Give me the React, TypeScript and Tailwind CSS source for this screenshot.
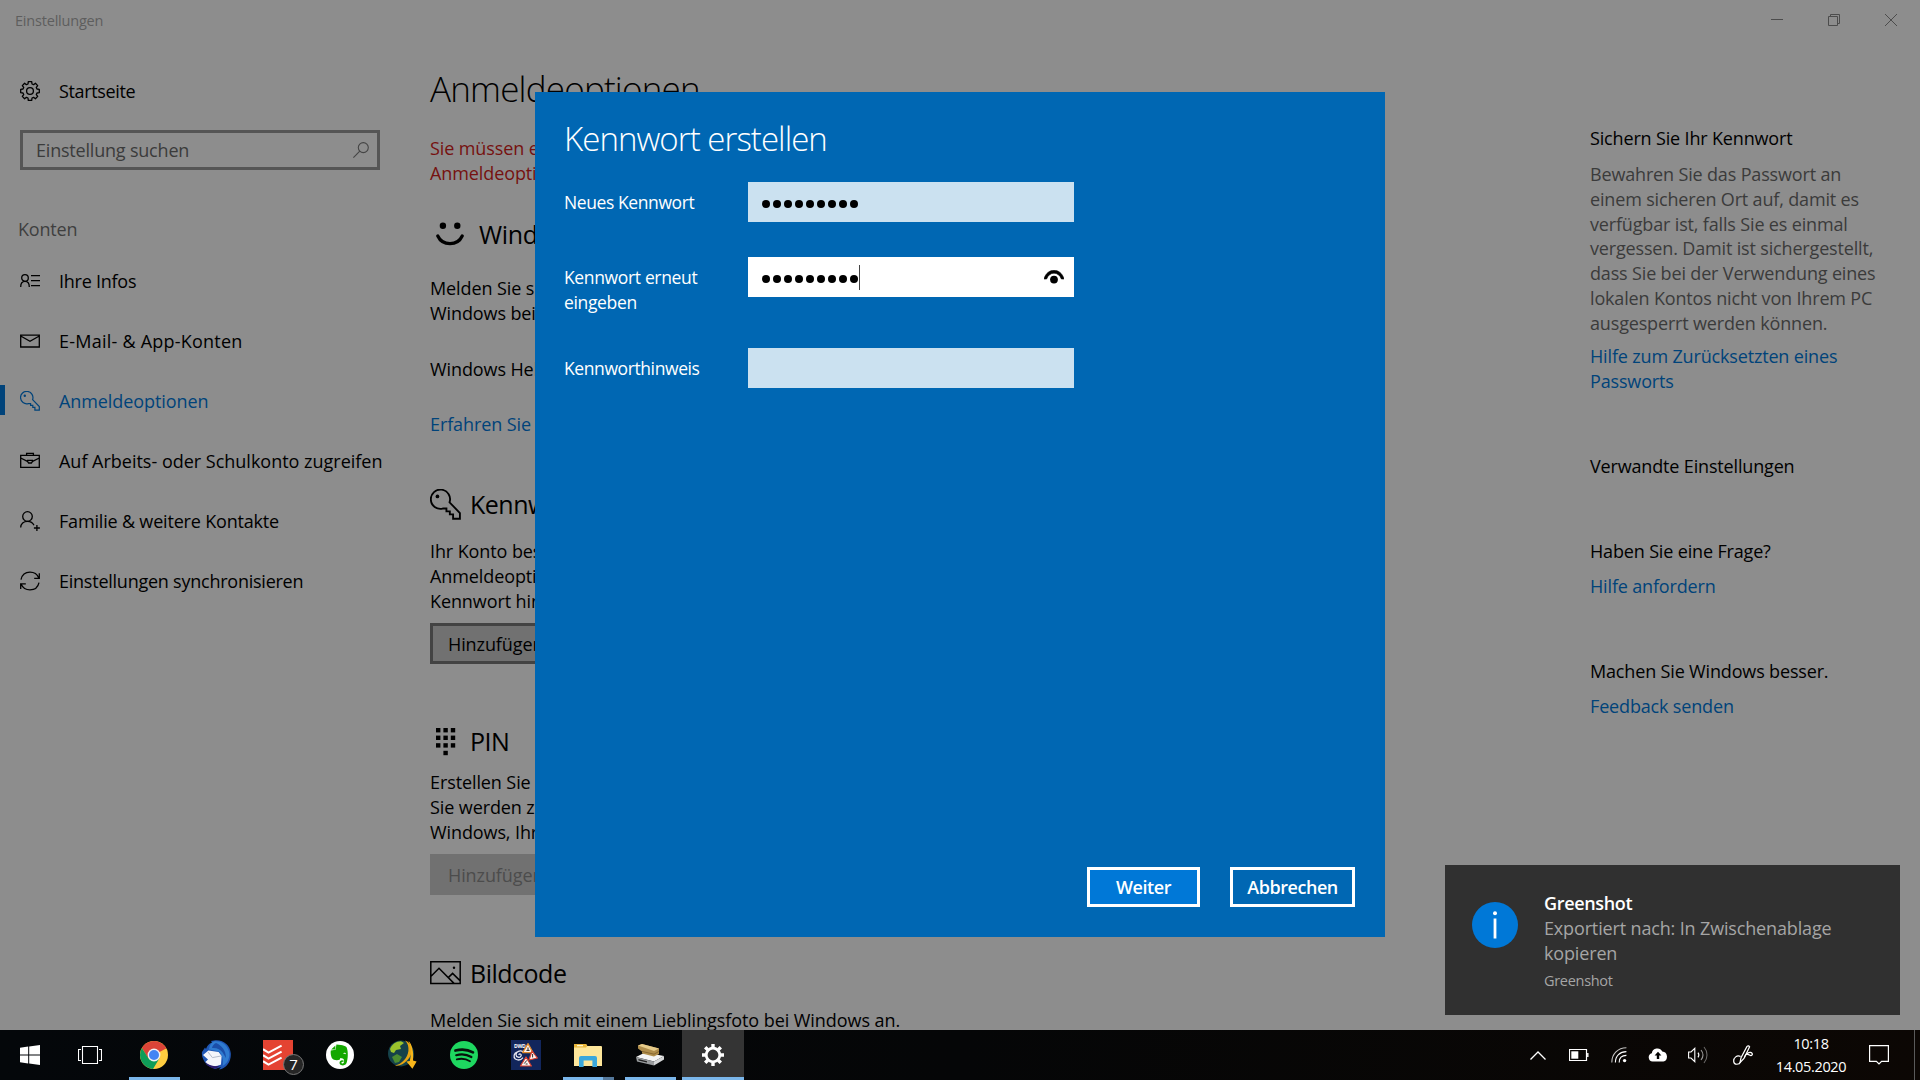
import type { ReactNode } from 'react';

type IconProps = { className?: string };

const GearIcon = ({ className }: IconProps) => (
  <svg viewBox="0 0 20 20" className={className} fill="none" stroke="currentColor" strokeWidth="1.3" strokeLinejoin="round">
    <path d="M8 3 L8.3 .7 H11.7 L12 3 L13.6 3.7 L15.4 2.3 L17.7 4.6 L16.3 6.4 L17 8 L19.3 8.3 V11.7 L17 12 L16.3 13.6 L17.7 15.4 L15.4 17.7 L13.6 16.3 L12 17 L11.7 19.3 H8.3 L8 17 L6.4 16.3 L4.6 17.7 L2.3 15.4 L3.7 13.6 L3 12 L.7 11.7 V8.3 L3 8 L3.7 6.4 L2.3 4.6 L4.6 2.3 L6.4 3.7 Z" />
    <circle cx="10" cy="10" r="3.4" />
  </svg>
);

const InfoIcon = () => (
  <svg viewBox="0 0 20 20" className="size-5" fill="none" stroke="currentColor" strokeWidth="1.3">
    <circle cx="5" cy="7" r="3.3" />
    <path d="M.7 16 C.7 12.5 2.5 10.4 5 10.4 S9.3 12.5 9.3 16 M11 4.6 H20 M11 9.6 H20 M11 14.6 H20" />
  </svg>
);

const MailIcon = () => (
  <svg viewBox="0 0 20 20" className="size-5" fill="none" stroke="currentColor" strokeWidth="1.3">
    <path d="M.7 4.2 H19.3 V16 H.7 Z M.7 5 L10 10.2 L19.3 5" />
  </svg>
);

const KeyIcon = ({ className }: IconProps) => (
  <svg viewBox="0 0 20 20" className={className} fill="none" stroke="currentColor" strokeWidth="1.2">
    <path d="M12.6 8.6 A6.2 6.2 0 1 0 8.2 12.6 L10.6 12.6 V14.4 H12.8 V16.4 H14.9 V19.2 H19.3 V15.5 Z" />
    <circle cx="4.8" cy="4.8" r="1.2" fill="currentColor" stroke="none" />
  </svg>
);

const BriefcaseIcon = () => (
  <svg viewBox="0 0 20 20" className="size-5" fill="none" stroke="currentColor" strokeWidth="1.3">
    <path d="M.7 4.4 H19.3 V16.4 H.7 Z M6.6 4.4 V2.4 H13.4 V4.4 M.7 7 L7.4 10.4 M19.3 7 L12.6 10.4 M7.6 9.4 H12.4 V10.6 L11.4 12 H8.6 L7.6 10.6 Z" />
  </svg>
);

const FamilyIcon = () => (
  <svg viewBox="0 0 20 20" className="size-5" fill="none" stroke="currentColor" strokeWidth="1.3">
    <circle cx="7.5" cy="5.5" r="4.8" />
    <path d="M.7 16.5 C.7 12.6 3.6 10.3 7.5 10.3 C10.6 10.3 13 12 14 14.2 M16.9 14 V20 M13.9 17 H19.9" />
  </svg>
);

const SyncIcon = () => (
  <svg viewBox="0 0 20 20" className="size-5" fill="none" stroke="currentColor" strokeWidth="1.3">
    <path d="M1 8.6 C2 4 5.6 1.2 10 1.2 C14 1.2 17.3 3.4 18.8 7 M19.3 2.2 V7.4 H14.2 M19 11.6 C18 16.2 14.4 18.9 10 18.9 C6 18.9 2.7 16.8 1.2 13.3 M.7 18 V12.9 H5.8" />
  </svg>
);

const SearchIcon = () => (
  <svg viewBox="0 0 16 16" className="size-4 text-[#454545]" fill="none" stroke="currentColor" strokeWidth="1.1">
    <circle cx="10.3" cy="5.6" r="5" />
    <path d="M6.8 9.2 L.4 15.6" />
  </svg>
);

const SmileIcon = () => (
  <svg viewBox="0 0 28 24" className="ml-1.5 h-6 w-7" fill="none">
    <circle cx="6.9" cy="3.7" r="3.2" fill="black" />
    <circle cx="21.3" cy="3.7" r="3.2" fill="black" />
    <path d="M1.8 14 C6.5 24.2 21.5 24.2 26.2 14" stroke="black" strokeWidth="3.2" strokeLinecap="round" />
  </svg>
);

const PinIcon = () => (
  <svg viewBox="0 0 20 28" className="mt-0.5 ml-1.5 h-7 w-5">
    {[0, 7.6, 15.2].map((y) => [0, 7.4, 14.8].map((x) => (
      <rect key={`${x}-${y}`} x={x} y={y} width="4.4" height="4.4" />
    )))}
    <rect x="7.4" y="22.8" width="4.4" height="4.4" />
  </svg>
);

const PictureIcon = () => (
  <svg viewBox="0 0 31 24" className="h-6 w-[31px]" fill="none" stroke="black" strokeWidth="1.5">
    <path d="M.8 .8 H30.2 V22.6 H.8 Z M.8 15.5 L9 7.2 L24 22.4 M18.2 16.6 L22.6 12.4 L30 19.6" />
    <circle cx="24" cy="6.7" r="1.2" fill="black" stroke="none" />
  </svg>
);

const navItems = [
  { label: 'Ihre Infos', icon: <InfoIcon />, tracking: 'tracking-[-0.25px]' },
  { label: 'E-Mail- & App-Konten', icon: <MailIcon />, tracking: 'tracking-[0.23px]' },
  { label: 'Anmeldeoptionen', icon: <KeyIcon className="size-5" />, tracking: 'tracking-[-0.08px]', active: true },
  { label: 'Auf Arbeits- oder Schulkonto zugreifen', icon: <BriefcaseIcon />, tracking: 'tracking-[-0.01px]' },
  { label: 'Familie & weitere Kontakte', icon: <FamilyIcon />, tracking: 'tracking-[-0.18px]' },
  { label: 'Einstellungen synchronisieren', icon: <SyncIcon />, tracking: 'tracking-[-0.24px]' },
];

const Sidebar = () => (
  <nav className="w-[430px] shrink-0 pt-[31px]">
    <div className="flex h-10 items-center pl-5">
      <GearIcon className="size-5" />
      <span className="ml-[19px] tracking-[-0.35px]">Startseite</span>
    </div>
    <div className="mt-[19px] ml-5 flex h-10 w-[360px] items-center justify-between border-3 border-[#555] pr-2 pl-[13px] text-[#3b3b3b]">
      <span>Einstellung suchen</span>
      <SearchIcon />
    </div>
    <h2 className="mt-[47px] pl-[18px] text-[#3f3f3f]">Konten</h2>
    <ul className="mt-[9px]">
      {navItems.map((item) => (
        <li key={item.label} className={`flex h-[60px] items-center ${item.active ? 'text-[#00437a]' : ''}`}>
          <span className={`mb-[2px] h-[30px] w-[5px] ${item.active ? 'bg-[#00437a]' : ''}`} />
          <span className="ml-[15px]">{item.icon}</span>
          <span className={`ml-[19px] whitespace-nowrap ${item.tracking}`}>{item.label}</span>
        </li>
      ))}
    </ul>
  </nav>
);

const SectionTitle = ({ icon, children }: { icon: ReactNode; children: ReactNode }) => (
  <h2 className="flex h-[34px] items-center text-[25px] leading-[34px] tracking-[-0.5px]">
    <span className="w-[40px] shrink-0">{icon}</span>
    {children}
  </h2>
);

const SignInOptions = () => (
  <main className="w-[1160px] shrink-0 tracking-[-0.1px] whitespace-nowrap">
    <h1 className="pt-[24px] text-[35px] leading-[50px] font-[350] tracking-[-0.8px]">Anmeldeoptionen</h1>
    <p className="mt-[22px] text-[#761110]">
      Sie müssen ein<br />
      Anmeldeoption
    </p>
    <section className="mt-[31px]">
      <h2 className="flex h-[34px] items-center pb-px text-[25px] leading-[34px] tracking-[-0.3px]">
        <span className="w-[49px] shrink-0"><SmileIcon /></span>
        Windows
      </h2>
      <p className="mt-[25px]">
        Melden Sie sich<br />
        Windows bei
      </p>
      <p className="mt-[31px]">Windows Hello</p>
      <p className="mt-[30px] text-[#00437a]">Erfahren Sie</p>
    </section>
    <section className="mt-[50px]">
      <SectionTitle icon={<KeyIcon className="size-[31px]" />}>Kennwort</SectionTitle>
      <p className="mt-[18px]">
        Ihr Konto besitzt<br />
        Anmeldeoption<br />
        Kennwort hinzu
      </p>
      <button className="mt-[9px] flex h-[41px] items-center border-3 border-[#434343] bg-[#717171] px-[15px] pt-px">Hinzufügen</button>
    </section>
    <section className="mt-[60px]">
      <SectionTitle icon={<PinIcon />}>PIN</SectionTitle>
      <p className="mt-[12px]">
        Erstellen Sie<br />
        Sie werden zur<br />
        Windows, Ihre
      </p>
      <button className="mt-[9px] flex h-[41px] items-center bg-[#717171] px-[18px] pt-px text-[#4c4c4c]">Hinzufügen</button>
    </section>
    <section className="mt-[61px]">
      <SectionTitle icon={<PictureIcon />}>Bildcode</SectionTitle>
      <p className="mt-[18px] tracking-[-0.06px]">Melden Sie sich mit einem Lieblingsfoto bei Windows an.</p>
    </section>
  </main>
);

const HelpColumn = () => (
  <aside className="w-[330px] pt-[86px] tracking-[-0.16px] whitespace-nowrap">
    <h3>Sichern Sie Ihr Kennwort</h3>
    <p className="mt-[11px] leading-[24.8px] text-[#3b3b3b]">
      Bewahren Sie das Passwort an<br />
      einem sicheren Ort auf, damit es<br />
      verfügbar ist, falls Sie es einmal<br />
      vergessen. Damit ist sichergestellt,<br />
      dass Sie bei der Verwendung eines<br />
      lokalen Kontos nicht von Ihrem PC<br />
      ausgesperrt werden können.
    </p>
    <p className="mt-2 text-[#00437a]">
      Hilfe zum Zurücksetzten eines<br />
      Passworts
    </p>
    <h3 className="mt-[60px]">Verwandte Einstellungen</h3>
    <h3 className="mt-[60px]">Haben Sie eine Frage?</h3>
    <p className="mt-2.5 text-[#00437a]">Hilfe anfordern</p>
    <h3 className="mt-[60px]">Machen Sie Windows besser.</h3>
    <p className="mt-2.5 text-[#00437a]">Feedback senden</p>
  </aside>
);

const Dots = () => (
  <div className="flex gap-[3px]">
    {Array.from({ length: 9 }, (_, i) => (
      <span key={i} className="size-2 rounded-full bg-black" />
    ))}
  </div>
);

const PasswordDialog = () => (
  <div className="absolute top-[92px] left-[535px] flex h-[845px] w-[850px] flex-col bg-[#0067b3] pt-[24px] pr-[30px] pb-[30px] pl-[29px] text-white">
    <h1 className="h-[46px] text-[33px] leading-[46px] font-[350] tracking-[-0.95px]">Kennwort erstellen</h1>
    <div className="mt-5 flex h-10">
      <label className="w-[184px] pt-2 text-[17.5px] tracking-[-0.4px]">Neues Kennwort</label>
      <div className="flex w-[326px] items-center bg-[#cbe1f0] px-3.5 pt-1">
        <Dots />
      </div>
    </div>
    <div className="mt-[35px] flex h-10">
      <label className="w-[184px] pt-2 text-[17.5px] leading-[24.5px] tracking-[-0.35px]">Kennwort erneut<br />eingeben</label>
      <div className="flex w-[326px] items-center bg-white px-3.5">
        <div className="pt-1"><Dots /></div>
        <span className="ml-px h-[25px] w-px bg-[#444]" />
        <svg viewBox="0 0 20 14" className="mr-[-4px] mb-px ml-auto h-3.5 w-5" fill="none">
          <path d="M0 9 C3 -2.6 17 -2.6 20 9 L17.4 9 C14.6 1.2 5.4 1.2 2.6 9 Z" fill="black" stroke="black" strokeWidth=".6" />
          <circle cx="10" cy="9.6" r="3.9" fill="black" />
        </svg>
      </div>
    </div>
    <div className="mt-[51px] flex h-10">
      <label className="w-[184px] pt-2 text-[17.5px] tracking-[-0.4px]">Kennworthinweis</label>
      <div className="w-[326px] bg-[#cbe1f0]" />
    </div>
    <div className="mt-auto flex justify-end gap-[30px] font-semibold tracking-[-0.45px]">
      <button className="h-10 w-[113px] border-3 border-white bg-[#0078d7]">Weiter</button>
      <button className="h-10 w-[125px] border-3 border-white">Abbrechen</button>
    </div>
  </div>
);

const Toast = () => (
  <div className="absolute top-[865px] left-[1445px] flex h-[150px] w-[455px] bg-[#303030] text-[#a5a5a5]">
    <svg viewBox="0 0 46 46" className="mt-[37px] ml-[27px] size-[46px]">
      <circle cx="23" cy="23" r="23" fill="#0078d7" />
      <path d="M23 16.5 V36.5" stroke="white" strokeWidth="2.8" />
      <circle cx="23" cy="11.3" r="2" fill="white" />
    </svg>
    <div className="ml-[26px] pt-[26px] tracking-[-0.15px]">
      <p className="font-semibold tracking-[-0.35px] text-white">Greenshot</p>
      <p>Exportiert nach: In Zwischenablage<br />kopieren</p>
      <p className="mt-[5px] text-[14.5px] leading-5 tracking-[-0.3px]">Greenshot</p>
    </div>
  </div>
);

const ChromeIcon = () => (
  <svg viewBox="0 0 28 28" className="size-7">
    <circle cx="14" cy="14" r="14" fill="#ffcd40" />
    <path d="M14 14 L1.9 7 A14 14 0 0 1 26.1 7.6 Z" fill="#db4437" />
    <path d="M14 7.6 H26.4 A14 14 0 0 0 2 7 L8 17 Z" fill="#db4437" />
    <path d="M1.9 7 A14 14 0 0 0 13 28 L19.5 17.2 L14 20 L8.4 17.3 Z" fill="#0f9d58" />
    <circle cx="14" cy="14" r="6.4" fill="#f1f1f1" />
    <circle cx="14" cy="14" r="5" fill="#4285f4" />
  </svg>
);

const ThunderbirdIcon = () => (
  <svg viewBox="0 0 30 30" className="size-[30px]">
    <path d="M10 1 L13 .4 C22 -1 29 5 29.8 13 C30.4 21 26 28 18 29.6 L20 27 L14 29 L10 27 L6 25 C2 20 .4 16 1 12 L4 7.6 L5 9 C6 6 8 3.6 11 2.6 Z" fill="#1f56b4" />
    <path d="M13 1.4 C22 .6 28 7 28.4 14 C28.6 19 26 23.4 21.6 26 C23 20 21 15 18 11.6 L8 9.6 C8.6 5 10 3 13 1.4 Z" fill="#2f7bd0" />
    <path d="M15 3 C21 5.6 25 11 25 18 L21.6 12.6 C19 9 16 7.6 11 8 C11.6 5.6 13 4 15 3 Z" fill="#1b4ea8" />
    <path d="M2 15 L7.4 10.4 L17.6 12 L20.6 16 L20 24.6 C15 27 7.4 27 4.4 22 L7 19.4 Z" fill="#f4f5fa" />
    <path d="M7 12 L11.4 17.6 L20 16" fill="none" stroke="#b6bccb" strokeWidth="1" />
    <path d="M4.4 22 C8 26 14 27 19 25.4 L15.4 28.6 C10 28.6 6 26 4.4 22 Z" fill="#2c1a6c" />
  </svg>
);

const TodoistIcon = () => (
  <div className="relative">
    <svg viewBox="0 0 30 30" className="size-[30px]">
      <rect width="30" height="30" fill="#e44332" />
      <path d="M0 9.2 L5.5 12.6 L18.6 5.6 M0 15.2 L5.5 18.6 L18.6 11.6 M0 21.2 L5.5 24.6 L18.6 17.6" fill="none" stroke="white" strokeWidth="2" />
    </svg>
    <span className="absolute top-[14px] left-5 flex size-[21px] items-center justify-center rounded-full border border-[#777] bg-[#262626] text-[15px] leading-none text-white">7</span>
  </div>
);

const EvernoteIcon = () => (
  <svg viewBox="0 0 28 28" className="size-7">
    <circle cx="14" cy="14" r="14" fill="white" />
    <path d="M10.4 3.6 L15 4 C17 4.3 19 5 20.4 6 C22 9 22.3 15 21 20.6 C20.4 24 17.6 25.2 15 24 C12.6 22.8 13.4 19.4 16 19.2 L17.6 19.4 V20.8 C15.6 20.4 14.8 21.6 16 22.4 C17.6 22.8 18.4 21.6 18 19 C17.6 17.4 16 17.4 14.4 17 L13.6 18.8 C10.4 19.8 7.4 19 5.8 17 C4.8 14.6 4.4 12 4.8 9.6 L9.6 8.8 Z" fill="#14a800" />
    <path d="M9.4 4.4 L5.2 8.6 L9.4 8.4 Z" fill="#14a800" />
    <path d="M17 12.4 C18 11.4 19.6 11.6 20 13.2 C19 12.8 18 12.6 17 12.4 Z" fill="white" />
  </svg>
);

const DownloaderIcon = () => (
  <svg viewBox="0 0 30 30" className="size-[30px]">
    <circle cx="14" cy="13.4" r="13" fill="#15424a" />
    <path d="M3 9 C5 4 9 1.4 14 1.2 L17 3 L13 6 L14 9 L9 10 L7 13 L4 12 Z" fill="#9bc42c" />
    <path d="M5 17 L10 14 L15 17 L12 22 L8 23 Z" fill="#4b8c30" />
    <path d="M18 .4 C26 3 27 14 20 20.6 C17 24 12 26.6 8 25.6 C15 24 20.6 18 21.4 11 C21.8 7 21 3 18 .4 Z" fill="#e7a512" />
    <path d="M21.4 1 C25 4 27 12 26 20.6 L29.6 21.4 L25.4 28.8 L19.4 21.6 L22.8 21 C24.4 14 24.4 7 21.4 1 Z" fill="#f7b51b" />
  </svg>
);

const SpotifyIcon = () => (
  <svg viewBox="0 0 28 28" className="size-7">
    <circle cx="14" cy="14" r="14" fill="#1ed760" />
    <g fill="none" stroke="#07110b" strokeLinecap="round">
      <path d="M5.4 9.6 C11 8 18 8.6 23 11.4" strokeWidth="2.6" />
      <path d="M6.2 14.2 C11 12.8 17 13.4 21.4 16" strokeWidth="2.2" />
      <path d="M6.8 18.4 C11 17.3 16 17.8 20 20.2" strokeWidth="1.8" />
    </g>
  </svg>
);

const WeatherIcon = () => (
  <svg viewBox="0 0 30 30" className="size-[30px]">
    <rect width="30" height="30" fill="#12265c" />
    <text x="3" y="8" fontSize="5" fontWeight="bold" letterSpacing="-0.3" fill="white">DWD</text>
    <path d="M8 15 C8 13 11 14 10 16 C9 18.4 5 17.4 5 14.4 C5 11.4 9 10 12 11.6 M6 12 C3 13 2 17 4.4 19 C7 20.6 10 20 12 17.6" fill="none" stroke="#e8e8f0" strokeWidth="1.3" />
    <g fill="#fdf3f0" stroke="#d8402f" strokeWidth="1.2" strokeLinejoin="round">
      <path d="M17 3.6 L22 12.6 H11.6 Z" stroke="#e28a2a" />
      <path d="M21 11 L26.4 18 L18 20 Z" />
      <path d="M15 17 L20.4 26 H9.4 Z" />
    </g>
    <path d="M17 7.4 V11 M15.4 10.4 H18.6 M21.6 14 V17.4 M13.2 23.6 L15.8 20.4 M14.6 24 H16.6" stroke="#333" strokeWidth="1" />
  </svg>
);

const ExplorerIcon = () => (
  <svg viewBox="0 0 28 23" className="h-[23px] w-7">
    <path d="M0 1 Q0 0 1 0 H12 L13.4 2 H27 Q28 2 28 3 V22 H0 Z" fill="#fde69a" />
    <path d="M0 1 Q0 0 1 0 H12 L13.2 2 L12 3.4 H0 Z" fill="#e9b63a" />
    <rect x="3" y="1" width="6" height="1.3" fill="#fff7d0" />
    <path d="M5 23 V14 Q5 12 7 12 H21 Q23 12 23 14 V23 H18.4 V16.6 H9.6 V23 Z" fill="#3aa7dc" />
  </svg>
);

const ScannerIcon = () => (
  <svg viewBox="0 0 28 22" className="h-[22px] w-7">
    <path d="M0 13 L9 8.6 L28 12 L18 17.4 Z" fill="#f4f4f4" />
    <path d="M0 13 L18 17.4 V21.6 L1 17.4 Z" fill="#9a9d9f" />
    <path d="M18 17.4 L28 12 V15.6 L18 21.6 Z" fill="#d5d7d8" />
    <path d="M2.4 15 L11 17.2 V18.6 L2.6 16.4 Z" fill="#222" />
    <path d="M2 1.6 L6 0 L23 4.4 V10 L18 12.6 L6 9.6 V7.4 L2 4.4 Z" fill="#b08e4c" />
    <path d="M2 1.6 L6 0 L23 4.4 L18 7 Z" fill="#e6cb8a" />
    <path d="M6 7.4 L18 10.2 L23 7.4" fill="none" stroke="#7b5c28" strokeWidth=".8" />
  </svg>
);

const SettingsIcon = () => (
  <svg viewBox="0 0 22 22" className="size-[22px]" fill="none" stroke="white">
    <circle cx="11" cy="11" r="6.8" strokeWidth="2.8" />
    <path d="M11 0 V3.6 M11 18.4 V22 M0 11 H3.6 M18.4 11 H22 M3.2 3.2 L5.8 5.8 M16.2 16.2 L18.8 18.8 M3.2 18.8 L5.8 16.2 M16.2 5.8 L18.8 3.2" strokeWidth="3.4" />
  </svg>
);

const apps = [
  { id: 'chrome', icon: <ChromeIcon />, open: true },
  { id: 'thunderbird', icon: <ThunderbirdIcon /> },
  { id: 'todoist', icon: <TodoistIcon /> },
  { id: 'evernote', icon: <EvernoteIcon /> },
  { id: 'jdownloader', icon: <DownloaderIcon /> },
  { id: 'spotify', icon: <SpotifyIcon /> },
  { id: 'weather', icon: <WeatherIcon /> },
  { id: 'explorer', icon: <ExplorerIcon />, open: true, stacked: true },
  { id: 'scanner', icon: <ScannerIcon />, open: true },
  { id: 'settings', icon: <SettingsIcon />, open: true, active: true },
];

const Tray = () => (
  <div className="ml-auto flex h-full items-center text-white">
    <svg viewBox="0 0 16 9" className="h-[9px] w-4" fill="none" stroke="currentColor" strokeWidth="1.3">
      <path d="M.5 8.5 L8 1 L15.5 8.5" />
    </svg>
    <svg viewBox="0 0 20 12" className="ml-[23px] h-3 w-5" fill="none" stroke="currentColor">
      <path d="M.5 .5 H17.5 V11.5 H.5 Z" strokeWidth="1.2" />
      <rect x="2.3" y="2.3" width="7" height="7.4" fill="currentColor" stroke="none" />
      <path d="M18.8 4 V8" strokeWidth="1.4" />
    </svg>
    <svg viewBox="0 0 16 16" className="ml-[22px] size-4" fill="none" stroke="currentColor" strokeWidth="1.1">
      <path d="M.8 15.4 C.8 7 7 .8 15.4 .8" opacity=".75" />
      <path d="M4.4 15.4 C4.4 8.8 8.8 4.6 15.4 4.6 M8.2 15.4 C8.2 11 11 8.4 15.4 8.4" />
      <circle cx="13.6" cy="13.6" r="1.7" fill="currentColor" stroke="none" />
    </svg>
    <svg viewBox="0 0 20 14" className="ml-[21px] h-3.5 w-5">
      <path d="M4.6 13.6 A4.3 4.3 0 0 1 3.8 5.2 A5.6 5.6 0 0 1 14.3 3.5 A5.2 5.2 0 0 1 15.4 13.6 Z" fill="white" />
      <path d="M10 3.8 L13.4 7.6 H11.2 V11 H8.8 V7.6 H6.6 Z" fill="black" />
    </svg>
    <svg viewBox="0 0 20 18" className="ml-5 h-[18px] w-5" fill="none" stroke="currentColor" strokeWidth="1.1">
      <path d="M.6 6 H3 L6.8 2.4 V15.6 L3 12 H.6 Z" />
      <path d="M10 6.6 C11 8 11 10 10 11.4" />
      <path d="M13 4 C15.4 7 15.4 11 13 14" opacity=".6" />
      <path d="M16 1 C20 5.6 20 12.4 16 17" opacity=".4" />
    </svg>
    <svg viewBox="0 0 20 20" className="ml-[25px] size-5" fill="none" stroke="currentColor" strokeWidth="1.2">
      <path d="M7 17.6 L8 12.8 L14 1.4 Q15.4 .2 16.6 1.8 L11 13.4 Z" />
      <path d="M7.6 11.6 C4 9.4 .4 13 .7 16.4 C1 20.2 6 20 7.6 17 M11.4 13 C12 10 13 8.4 15.4 9.6 C19 12 21 8.6 17.6 7.4 C16 7 14.6 8 13.6 9" />
    </svg>
    <div className="ml-[22px] w-[72px] text-center text-[14.5px] leading-[23px] tracking-[-0.35px]">
      10:18<br />14.05.2020
    </div>
    <svg viewBox="0 0 20 20" className="ml-[22px] size-5" fill="none" stroke="currentColor" strokeWidth="1.2">
      <path d="M.6 .6 H19.4 V16.4 H12.6 L10 19 L7.4 16.4 H.6 Z" />
    </svg>
    <span className="mr-[5px] ml-[25px] h-full w-px bg-[#5a5a5a]" />
  </div>
);

const Taskbar = () => (
  <footer className="flex h-[50px] items-center bg-gradient-to-r from-[#04070a] via-[#050607] to-[#0c0704]">
    <svg viewBox="0 0 20 20" className="ml-5 size-5" fill="white">
      <path d="M0 2.8 L8.2 1.6 V9.4 H0 Z M9.2 1.4 L20 0 V9.4 H9.2 Z M0 10.4 H8.2 V18.4 L0 17.2 Z M9.2 10.4 H20 V20 L9.2 18.5 Z" />
    </svg>
    <svg viewBox="0 0 24 18" className="ml-[38px] h-[18px] w-6" fill="none" stroke="white" strokeWidth="1.1">
      <path d="M4.5 .5 H19.5 V17.5 H4.5 Z M3 3.5 H.5 V14.5 H3 M21 3.5 H23.5 V14.5 H21" />
    </svg>
    <ul className="ml-[21px] flex h-full">
      {apps.map((app) => (
        <li key={app.id} className={`flex w-[62px] flex-col items-center ${app.active ? 'ml-px w-[61px] bg-[#343434]' : ''}`}>
          <div className="flex h-[47px] items-center pt-[3px]">{app.icon}</div>
          {app.open && (
            <div className={`flex h-[3px] justify-end bg-[#7ab6ea] ${app.active ? 'w-full' : 'w-[51px]'}`}>
              {app.stacked && <span className="w-[11px] bg-[#55799c]" />}
            </div>
          )}
        </li>
      ))}
    </ul>
    <Tray />
  </footer>
);

const App = () => (
  <div className="relative flex h-[1080px] w-[1920px] flex-col overflow-hidden bg-[#8d8d8d] font-['Open_Sans',sans-serif] text-[18px] leading-[25px] tracking-[-0.2px] text-black">
    <header className="flex h-10 shrink-0 items-center pl-[15px]">
      <span className="text-[14.5px] text-[#5e5e5e]">Einstellungen</span>
      <svg viewBox="0 0 126 12" className="mr-[23px] ml-auto h-3 w-[126px]" fill="none" stroke="#4c4c4c" strokeWidth="1">
        <path d="M0 5.5 H12 M57.5 2.5 H66.5 V11.5 H57.5 Z M59.5 2.5 V.5 H68.5 V9.5 H66.5 M114 0 L126 12 M126 0 L114 12" />
      </svg>
    </header>
    <div className="flex h-[990px] shrink-0 overflow-hidden">
      <Sidebar />
      <SignInOptions />
      <HelpColumn />
    </div>
    <Taskbar />
    <PasswordDialog />
    <Toast />
  </div>
);

export default App;
